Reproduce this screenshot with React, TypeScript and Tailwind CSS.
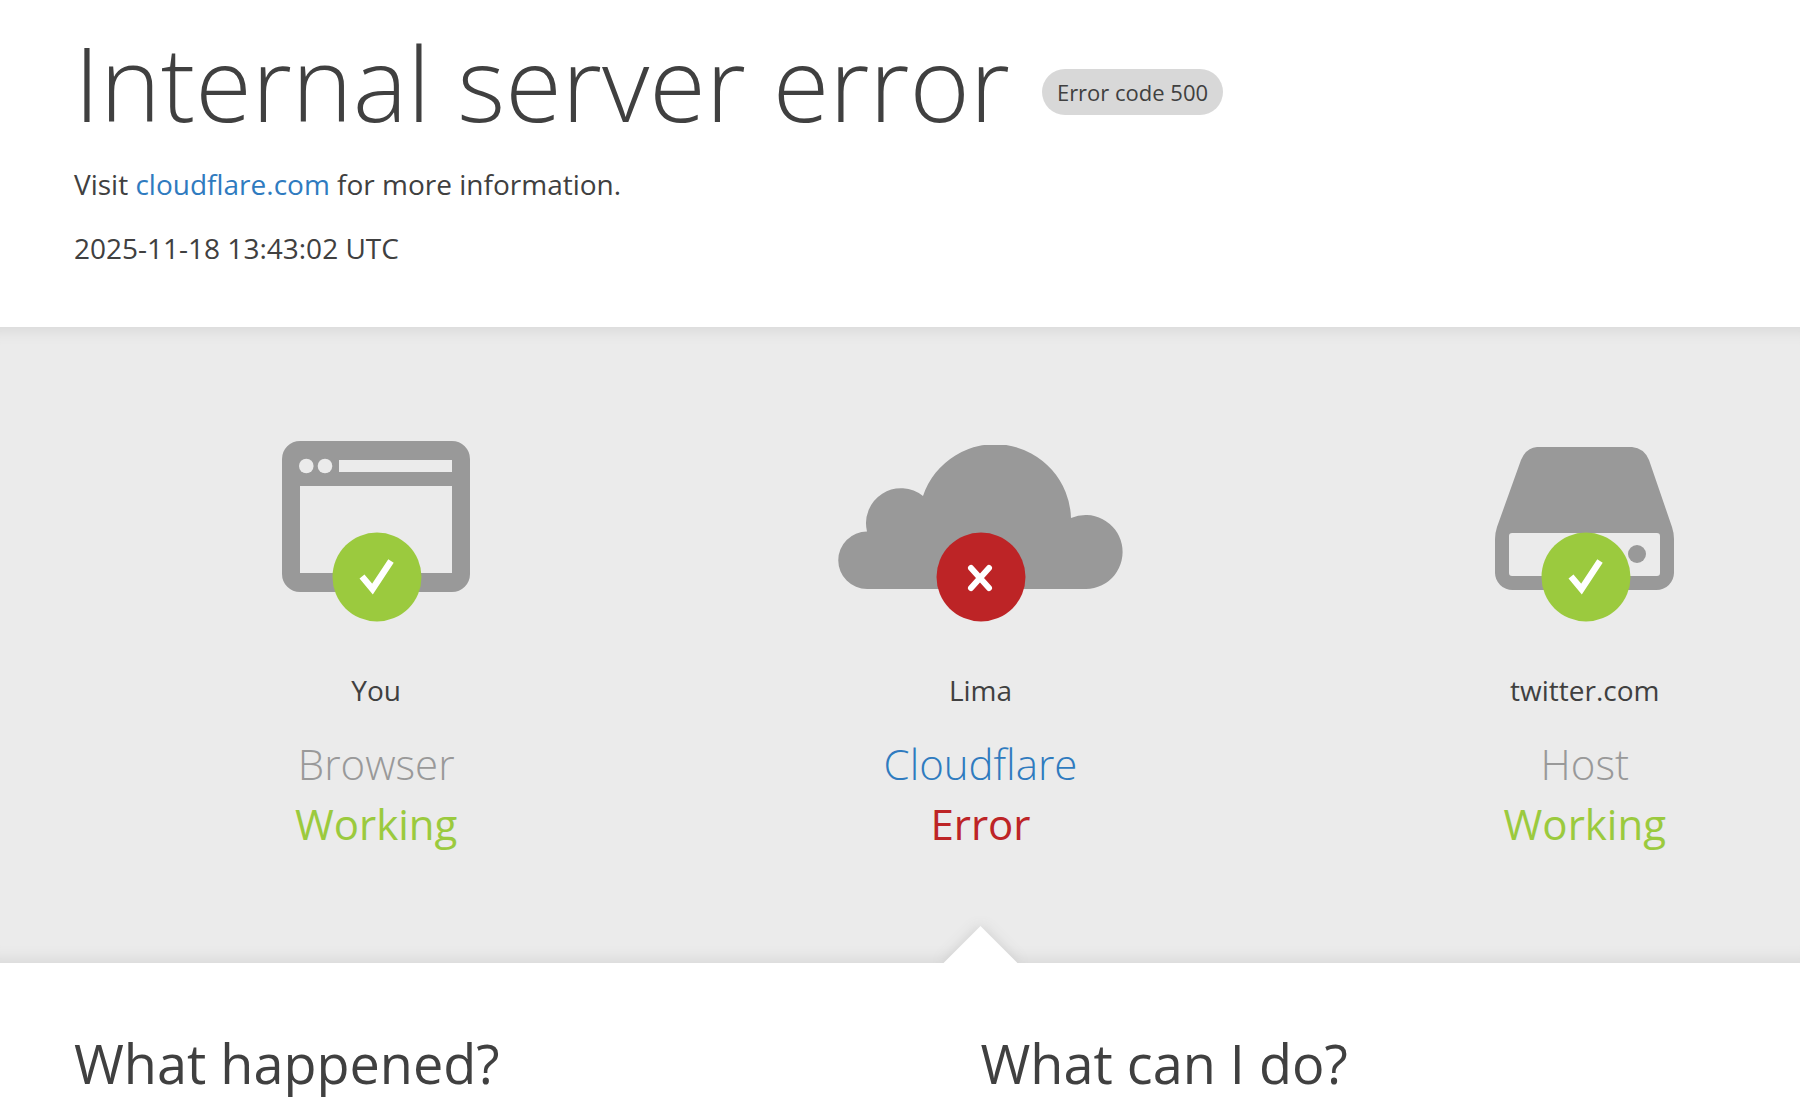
import type { ReactNode } from "react";

type Status = {
  name: string;
  role: string;
  href?: string;
  ok: boolean;
  icon: ReactNode;
};

const BrowserIcon = () => (
  <svg viewBox="0 0 188 151" className="w-[188px] h-[151px]" aria-hidden="true">
    <path
      fill="#999"
      fillRule="evenodd"
      d="M18 0H170A18 18 0 0 1 188 18V133A18 18 0 0 1 170 151H18A18 18 0 0 1 0 133V18A18 18 0 0 1 18 0ZM57 19V31H170V19ZM18 45V132H170V45Z"
    />
    <circle cx="24.300" cy="25" r="7.300" fill="#ebebeb" />
    <circle cx="43" cy="25" r="7.300" fill="#ebebeb" />
  </svg>
);

const CloudIcon = () => (
  <svg viewBox="0 0 285 147" className="w-[285px] h-[147px]" aria-hidden="true">
    <path
      fill="#999"
      d="M29 144A28.700 28.700 0 0 1 29 86.500A35 35 0 0 1 85 51A76 76 0 0 1 233 73A37 37 0 1 1 248 144Z"
    />
  </svg>
);

const ServerIcon = () => (
  <svg viewBox="0 0 179 145" className="w-[179px] h-[145px]" aria-hidden="true">
    <path
      fill="#999"
      fillRule="evenodd"
      d="M42 0H137Q149 1 154 13L177 80Q179 86 179 92V125A17.500 17.500 0 0 1 161 143H18A17.500 17.500 0 0 1 0 125V92Q0 86 2 80L26 13Q31 1 42 0ZM17 86Q14 86 14 89V126Q14 129 17 129H162Q165 129 165 126V89Q165 86 162 86Z"
    />
    <circle cx="142" cy="107" r="9" fill="#999" />
  </svg>
);

const Badge = ({ ok }: { ok: boolean }) => (
  <svg viewBox="0 0 90 90" className="absolute left-1/2 -bottom-[30px] ml-[-44px] size-[90px]" aria-hidden="true">
    <circle cx="45" cy="45" r="44.500" fill={ok ? "#9bca3e" : "#bd2426"} />
    {ok ? (
      <path d="M30 44.500L40.500 57L59 29" fill="none" stroke="#fff" strokeWidth="6.500" />
    ) : (
      <path d="M35 36L53 56M53 36L35 56" fill="none" stroke="#fff" strokeWidth="6" strokeLinecap="round" />
    )}
  </svg>
);

const statuses: Status[] = [
  { name: "You", role: "Browser", ok: true, icon: <BrowserIcon /> },
  { name: "Lima", role: "Cloudflare", href: "#cloudflare", ok: false, icon: <CloudIcon /> },
  { name: "twitter.com", role: "Host", ok: true, icon: <ServerIcon /> },
];

const StatusItem = ({ name, role, href, ok, icon }: Status) => (
  <div className="flex flex-col items-center text-center">
    <div className="relative flex h-[152px] items-end">
      {icon}
      <Badge ok={ok} />
    </div>
    <span className="mt-[78px] text-[28px] leading-10">{name}</span>
    <h3 className="mt-6 text-[42px] leading-[60px] font-light text-[#999]">
      {href ? <a href={href} className="text-[#2f7bbf]">{role}</a> : role}
    </h3>
    <span className={ok ? "text-[42px] leading-[60px] text-[#9bca3e]" : "text-[42px] leading-[60px] text-[#bd2426]"}>
      {ok ? "Working" : "Error"}
    </span>
  </div>
);

export default function App() {
  return (
    <div className="min-h-screen overflow-x-hidden bg-white font-['Open_Sans','Noto_Sans',sans-serif] text-[#404040]">
      <header className="px-[74px] pt-5 pb-[59px]">
        <div className="flex items-center gap-8">
          <h1 className="text-[103px] leading-[124px] font-light">Internal server error</h1>
          <span className="mt-5 rounded-full bg-[#d8d8d8] px-[15px] py-2 text-[22px] leading-[30px]">
            Error code 500
          </span>
        </div>
        <p className="mt-5 text-[28px] leading-10">
          Visit <a href="https://www.cloudflare.com/" className="text-[#2f7bbf]">cloudflare.com</a> for more information.
        </p>
        <p className="mt-6 text-[28px] leading-10">2025-11-18 13:43:02 UTC</p>
      </header>

      <section className="overflow-hidden bg-[#ebebeb] pt-[113px] shadow-[inset_0_18px_14px_-14px_#d8d8d8,inset_0_-18px_14px_-14px_#d8d8d8]">
        {/* the status row runs past the right edge of the page */}
        <div className="relative ml-[74px] -mr-[87px] grid grid-cols-3 pb-[109px]">
          {statuses.map((s) => (
            <StatusItem key={s.name} {...s} />
          ))}
          <div className="absolute -bottom-[27px] left-1/2 -ml-[27px] size-[53px] rotate-45 bg-white shadow-[0_0_14px_#ccc]" />
        </div>
      </section>

      <section className="ml-[74px] -mr-[87px] grid grid-cols-2 pt-[62px]">
        <h2 className="text-[54px] leading-[76px]">What happened?</h2>
        <h2 className="text-[54px] leading-[76px]">What can I do?</h2>
      </section>
    </div>
  );
}
